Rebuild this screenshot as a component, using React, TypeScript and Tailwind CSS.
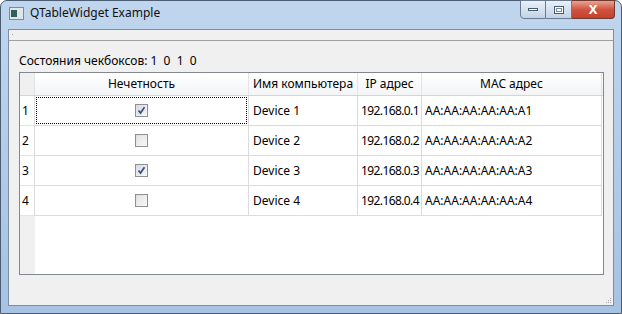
import React from "react";

const rows = [
  { n: 1, checked: true, name: "Device 1", ip: "192.168.0.1", mac: "AA:AA:AA:AA:AA:A1" },
  { n: 2, checked: false, name: "Device 2", ip: "192.168.0.2", mac: "AA:AA:AA:AA:AA:A2" },
  { n: 3, checked: true, name: "Device 3", ip: "192.168.0.3", mac: "AA:AA:AA:AA:AA:A3" },
  { n: 4, checked: false, name: "Device 4", ip: "192.168.0.4", mac: "AA:AA:AA:AA:AA:A4" },
];

function CheckBox({ checked }: { checked: boolean }) {
  return (
    <div className="w-[13px] h-[13px] border border-[#8f8f8f] bg-gradient-to-br from-[#dcdcdc] to-[#fbfbfb] p-[1px]">
      <div
        className={`w-full h-full bg-gradient-to-br flex items-center justify-center ${
          checked ? "from-[#d6dbe6] to-[#f3f5f9]" : "from-[#e4e4e4] to-[#f6f6f6]"
        }`}
      >
        {checked && (
          <svg width="9" height="9" viewBox="0 0 9 9">
            <path d="M1.5 4.5 L3.5 7 L7.5 1.2" fill="none" stroke="#3b4f83" strokeWidth="1.7" />
          </svg>
        )}
      </div>
    </div>
  );
}

export default function App() {
  return (
    <div
      className="w-[622px] h-[314px] bg-gradient-to-b from-[#c0d6ee] via-[#b2cbe8] to-[#a7c2e3] rounded-t-[7px] border border-[#4c5d73] flex flex-col text-[12px] text-black"
      style={{ fontFamily: '"Noto Sans", "Open Sans", sans-serif' }}
    >
      {/* title bar */}
      <div className="h-[28px] flex items-start shrink-0 relative">
        <div className="flex items-center h-[24px] pl-[8px] gap-[6px]">
          <div className="w-[15px] h-[13px] bg-[#dfe5e9] border border-[#7d8a93] flex items-center pl-[1px]">
            <div className="w-[6px] h-[7px] bg-[#2f6158]" />
          </div>
          <span className="text-[12px] text-[#101010]">QTableWidget Example</span>
        </div>
        <div className="absolute right-[6px] top-[-1px] flex">
          <div className="w-[26px] h-[19px] border border-[#6a7b90] rounded-bl-[4px] bg-gradient-to-b from-[#e9f0f8] to-[#c2d3e6] flex items-center justify-center">
            <div className="w-[10px] h-[3px] bg-white border border-[#485a72]" />
          </div>
          <div className="w-[26px] h-[19px] border-y border-r border-[#6a7b90] bg-gradient-to-b from-[#e9f0f8] to-[#c2d3e6] flex items-center justify-center">
            <div className="w-[10px] h-[8px] border border-[#485a72] bg-white p-[1px]">
              <div className="w-full h-full border border-[#7a8aa0]" />
            </div>
          </div>
          <div className="w-[43px] h-[19px] border-y border-r border-[#6d3a34] rounded-br-[4px] bg-gradient-to-b from-[#e8a293] via-[#d0533f] to-[#c4402c] flex items-center justify-center text-white font-bold text-[13px] leading-none">
            X
          </div>
        </div>
      </div>

      {/* client area */}
      <div className="flex-1 mx-[7px] mb-[7px] border border-[#7b8ea7] bg-[#f0f0f0] flex flex-col">
        <div className="h-[11px] border-b border-[#a0a0a0] relative shrink-0">
          <div className="absolute left-[3px] top-[4px] w-[1px] h-[1px] bg-[#9a9a9a]" />
        </div>
        <div className="px-[10px] pt-[10px] flex-1 flex flex-col">
          <div className="h-[20px] leading-[20px] text-[12px]">Состояния чекбоксов:&nbsp;1&nbsp; 0&nbsp; 1&nbsp; 0</div>
          <div className="mt-[1px] w-[585px] h-[203px] border border-[#828790] bg-white flex flex-col">
            {/* header */}
            <div className="flex h-[23px] border-b border-[#d5d5d5] bg-gradient-to-b from-white to-[#f3f4f6] shrink-0">
              <div className="w-[15px] bg-[#f0f0f0] border-r border-[#e3e3e3]" />
              <div className="w-[214px] border-r border-[#e3e3e3] flex items-center justify-center">Нечетность</div>
              <div className="w-[109px] border-r border-[#e3e3e3] flex items-center justify-center">Имя компьютера</div>
              <div className="w-[64px] border-r border-[#e3e3e3] flex items-center justify-center">IP адрес</div>
              <div className="w-[180px] border-r border-[#e3e3e3] flex items-center justify-center">MAC адрес</div>
            </div>
            <div className="flex flex-1">
              <div className="w-[15px] bg-[#f0f0f0] flex flex-col">
                {rows.map((r) => (
                  <div key={r.n} className="h-[30px] border-b border-[#e3e3e3] border-r border-r-[#dcdcdc] bg-white flex items-center pl-[2px]">
                    {r.n}
                  </div>
                ))}
              </div>
              <div className="flex flex-col">
                {rows.map((r) => (
                  <div key={r.n} className="flex h-[30px] border-b border-[#dcdcdc]">
                    <div className="w-[214px] border-r border-[#dcdcdc] flex items-center justify-center relative">
                      {r.n === 1 && (
                        <div className="absolute inset-[1px] border border-dotted border-black" />
                      )}
                      <CheckBox checked={r.checked} />
                    </div>
                    <div className="w-[109px] border-r border-[#dcdcdc] flex items-center pl-[4px]">{r.name}</div>
                    <div className="w-[64px] border-r border-[#dcdcdc] flex items-center pl-[3px] tracking-[-0.6px] whitespace-nowrap overflow-hidden">{r.ip}</div>
                    <div className="w-[180px] border-r border-[#dcdcdc] flex items-center pl-[3px]">{r.mac}</div>
                  </div>
                ))}
              </div>
            </div>
          </div>
        </div>
        <div className="h-[10px] relative shrink-0">
          <div className="absolute right-[2px] bottom-[2px] grid grid-cols-3 gap-[1px]">
            <div className="w-[1px] h-[1px]" />
            <div className="w-[1px] h-[1px]" />
            <div className="w-[1px] h-[1px] bg-[#aaa]" />
            <div className="w-[1px] h-[1px]" />
            <div className="w-[1px] h-[1px] bg-[#aaa]" />
            <div className="w-[1px] h-[1px] bg-[#aaa]" />
            <div className="w-[1px] h-[1px] bg-[#aaa]" />
            <div className="w-[1px] h-[1px] bg-[#aaa]" />
            <div className="w-[1px] h-[1px] bg-[#aaa]" />
          </div>
        </div>
      </div>
    </div>
  );
}
